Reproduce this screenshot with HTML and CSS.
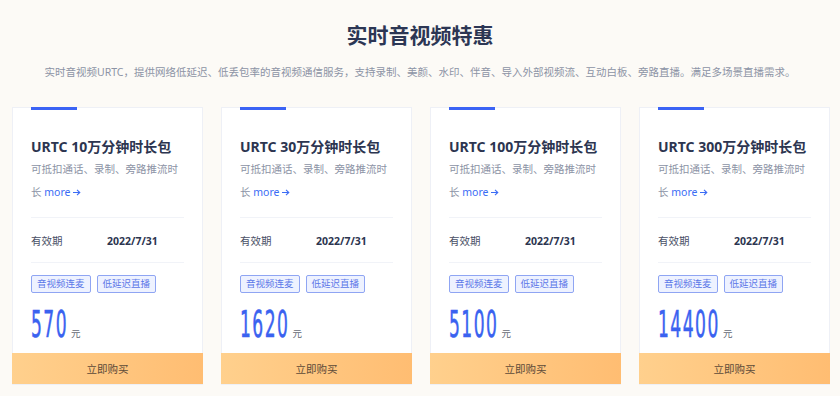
FILE: index.html
```html
<!DOCTYPE html>
<html>
<head>
<meta name="viewport" content="width=device-width, initial-scale=1">
<link rel="stylesheet" href="styles.css">
</head>
<body>
<div class="page">
  <h1 class="hd">实时音视频特惠</h1>
  <p class="sub">实时音视频URTC，提供网络低延迟、低丢包率的音视频通信服务，支持录制、美颜、水印、伴音、导入外部视频流、互动白板、旁路直播。满足多场景直播需求。</p>

  <div class="cards">
    <div class="card">
      <div class="bar"></div>
      <div class="tt">URTC 10万分钟时长包</div>
      <div class="ds">可抵扣通话、录制、旁路推流时长 <a class="more" href="#">more<svg class="arr" viewBox="0 0 8 7"><path d="M0 3.5h7M4 .8l2.8 2.7L4 6.2"/></svg></a></div>
      <div class="line"></div>
      <div class="exp"><span class="lb">有效期</span><span class="dt">2022/7/31</span></div>
      <div class="line"></div>
      <div class="tags"><span class="tag">音视频连麦</span><span class="tag">低延迟直播</span></div>
      <div class="price"><span class="num">570<span class="unit">元</span></span></div>
      <button class="buy">立即购买</button>
    </div>
    <div class="card">
      <div class="bar"></div>
      <div class="tt">URTC 30万分钟时长包</div>
      <div class="ds">可抵扣通话、录制、旁路推流时长 <a class="more" href="#">more<svg class="arr" viewBox="0 0 8 7"><path d="M0 3.5h7M4 .8l2.8 2.7L4 6.2"/></svg></a></div>
      <div class="line"></div>
      <div class="exp"><span class="lb">有效期</span><span class="dt">2022/7/31</span></div>
      <div class="line"></div>
      <div class="tags"><span class="tag">音视频连麦</span><span class="tag">低延迟直播</span></div>
      <div class="price"><span class="num">1620<span class="unit">元</span></span></div>
      <button class="buy">立即购买</button>
    </div>
    <div class="card">
      <div class="bar"></div>
      <div class="tt">URTC 100万分钟时长包</div>
      <div class="ds">可抵扣通话、录制、旁路推流时长 <a class="more" href="#">more<svg class="arr" viewBox="0 0 8 7"><path d="M0 3.5h7M4 .8l2.8 2.7L4 6.2"/></svg></a></div>
      <div class="line"></div>
      <div class="exp"><span class="lb">有效期</span><span class="dt">2022/7/31</span></div>
      <div class="line"></div>
      <div class="tags"><span class="tag">音视频连麦</span><span class="tag">低延迟直播</span></div>
      <div class="price"><span class="num">5100<span class="unit">元</span></span></div>
      <button class="buy">立即购买</button>
    </div>
    <div class="card">
      <div class="bar"></div>
      <div class="tt">URTC 300万分钟时长包</div>
      <div class="ds">可抵扣通话、录制、旁路推流时长 <a class="more" href="#">more<svg class="arr" viewBox="0 0 8 7"><path d="M0 3.5h7M4 .8l2.8 2.7L4 6.2"/></svg></a></div>
      <div class="line"></div>
      <div class="exp"><span class="lb">有效期</span><span class="dt">2022/7/31</span></div>
      <div class="line"></div>
      <div class="tags"><span class="tag">音视频连麦</span><span class="tag">低延迟直播</span></div>
      <div class="price"><span class="num">14400<span class="unit">元</span></span></div>
      <button class="buy">立即购买</button>
    </div>
  </div>
</div>
</body>
</html>
```

FILE: styles.css
```css
* {box-sizing: border-box;}
body {
  margin: 0;
  background: #fcfaf6;
  font-family: "Noto Sans", "Noto Sans CJK SC", sans-serif;
}
a {text-decoration: none;}

.page {padding-top: 20px;}

.hd {
  margin: 0;
  text-align: center;
  font-size: 21px;
  line-height: 30px;
  font-weight: bold;
  color: #2c3654;
}

.sub {
  margin: 14px 0 0;
  text-align: center;
  font-size: 10.5px;
  line-height: 16px;
  color: #8c93a5;
}

.cards {
  margin-top: 27px;
  display: grid;
  grid-template-columns: repeat(4, 191px);
  gap: 18px;
  padding-left: 12px;
}

.card {
  background: #fff;
  border: 1px solid #eef0f6;
  display: flex;
  flex-direction: column;
  padding: 0 18px;
  height: 278px;
}

.bar {
  width: 46px;
  height: 3px;
  margin-top: -1px;
  background: #3b63f5;
}

.tt {
  margin-top: 26px;
  font-size: 14px;
  line-height: 22px;
  font-weight: bold;
  color: #2c3550;
  white-space: nowrap;
}

.ds {
  font-size: 10.5px;
  line-height: 23px;
  color: #8c93a5;
}
.more {color: #3b6cf5;}
.arr {
  width: 8px;
  height: 7px;
  margin-left: 3px;
  fill: none;
  stroke: #3b6cf5;
  stroke-width: 1.1;
}

.line {
  height: 1px;
  background: #f1f3f8;
  margin-top: 13px;
}

.exp {
  display: flex;
  margin: 13px 0 0;
  font-size: 10.5px;
  line-height: 20px;
}
.exp + .line {margin-top: 11px;}
.lb {width: 76px; color: #4a5066;}
.dt {font-weight: bold; color: #2c3550;}

.tags {
  display: flex;
  gap: 6px;
  margin-top: 12px;
}
.tag {
  height: 18px;
  line-height: 16px;
  padding: 0 5px;
  font-size: 9.5px;
  color: #5b78e8;
  background: #eef2ff;
  border: 1px solid #8fa5f3;
  border-radius: 2px;
}

.price {
  margin-top: 15px;
  height: 32px;
  white-space: nowrap;
}
.num {
  display: inline-block;
  font-family: "DejaVu Sans Condensed", "DejaVu Sans", sans-serif;
  font-size: 38px;
  line-height: 32px;
  letter-spacing: 3px;
  color: #3a62f0;
  -webkit-text-stroke: 0.6px #3a62f0;
  transform: scaleX(.5);
  transform-origin: 0 0;
}
.unit {
  display: inline-block;
  margin-left: 6px;
  font-family: "Noto Sans CJK SC", sans-serif;
  letter-spacing: 0;
  font-size: 9.5px;
  color: #666a75;
  -webkit-text-stroke: 0;
  transform: scaleX(2);
  transform-origin: 0 0;
}

.buy {
  margin: auto -19px 0;
  height: 31px;
  border: 0;
  background: linear-gradient(90deg, #ffd08d, #ffbd72);
  font-family: "Noto Sans CJK SC", sans-serif;
  font-size: 10.5px;
  color: #5c4a38;
  cursor: pointer;
}
```
